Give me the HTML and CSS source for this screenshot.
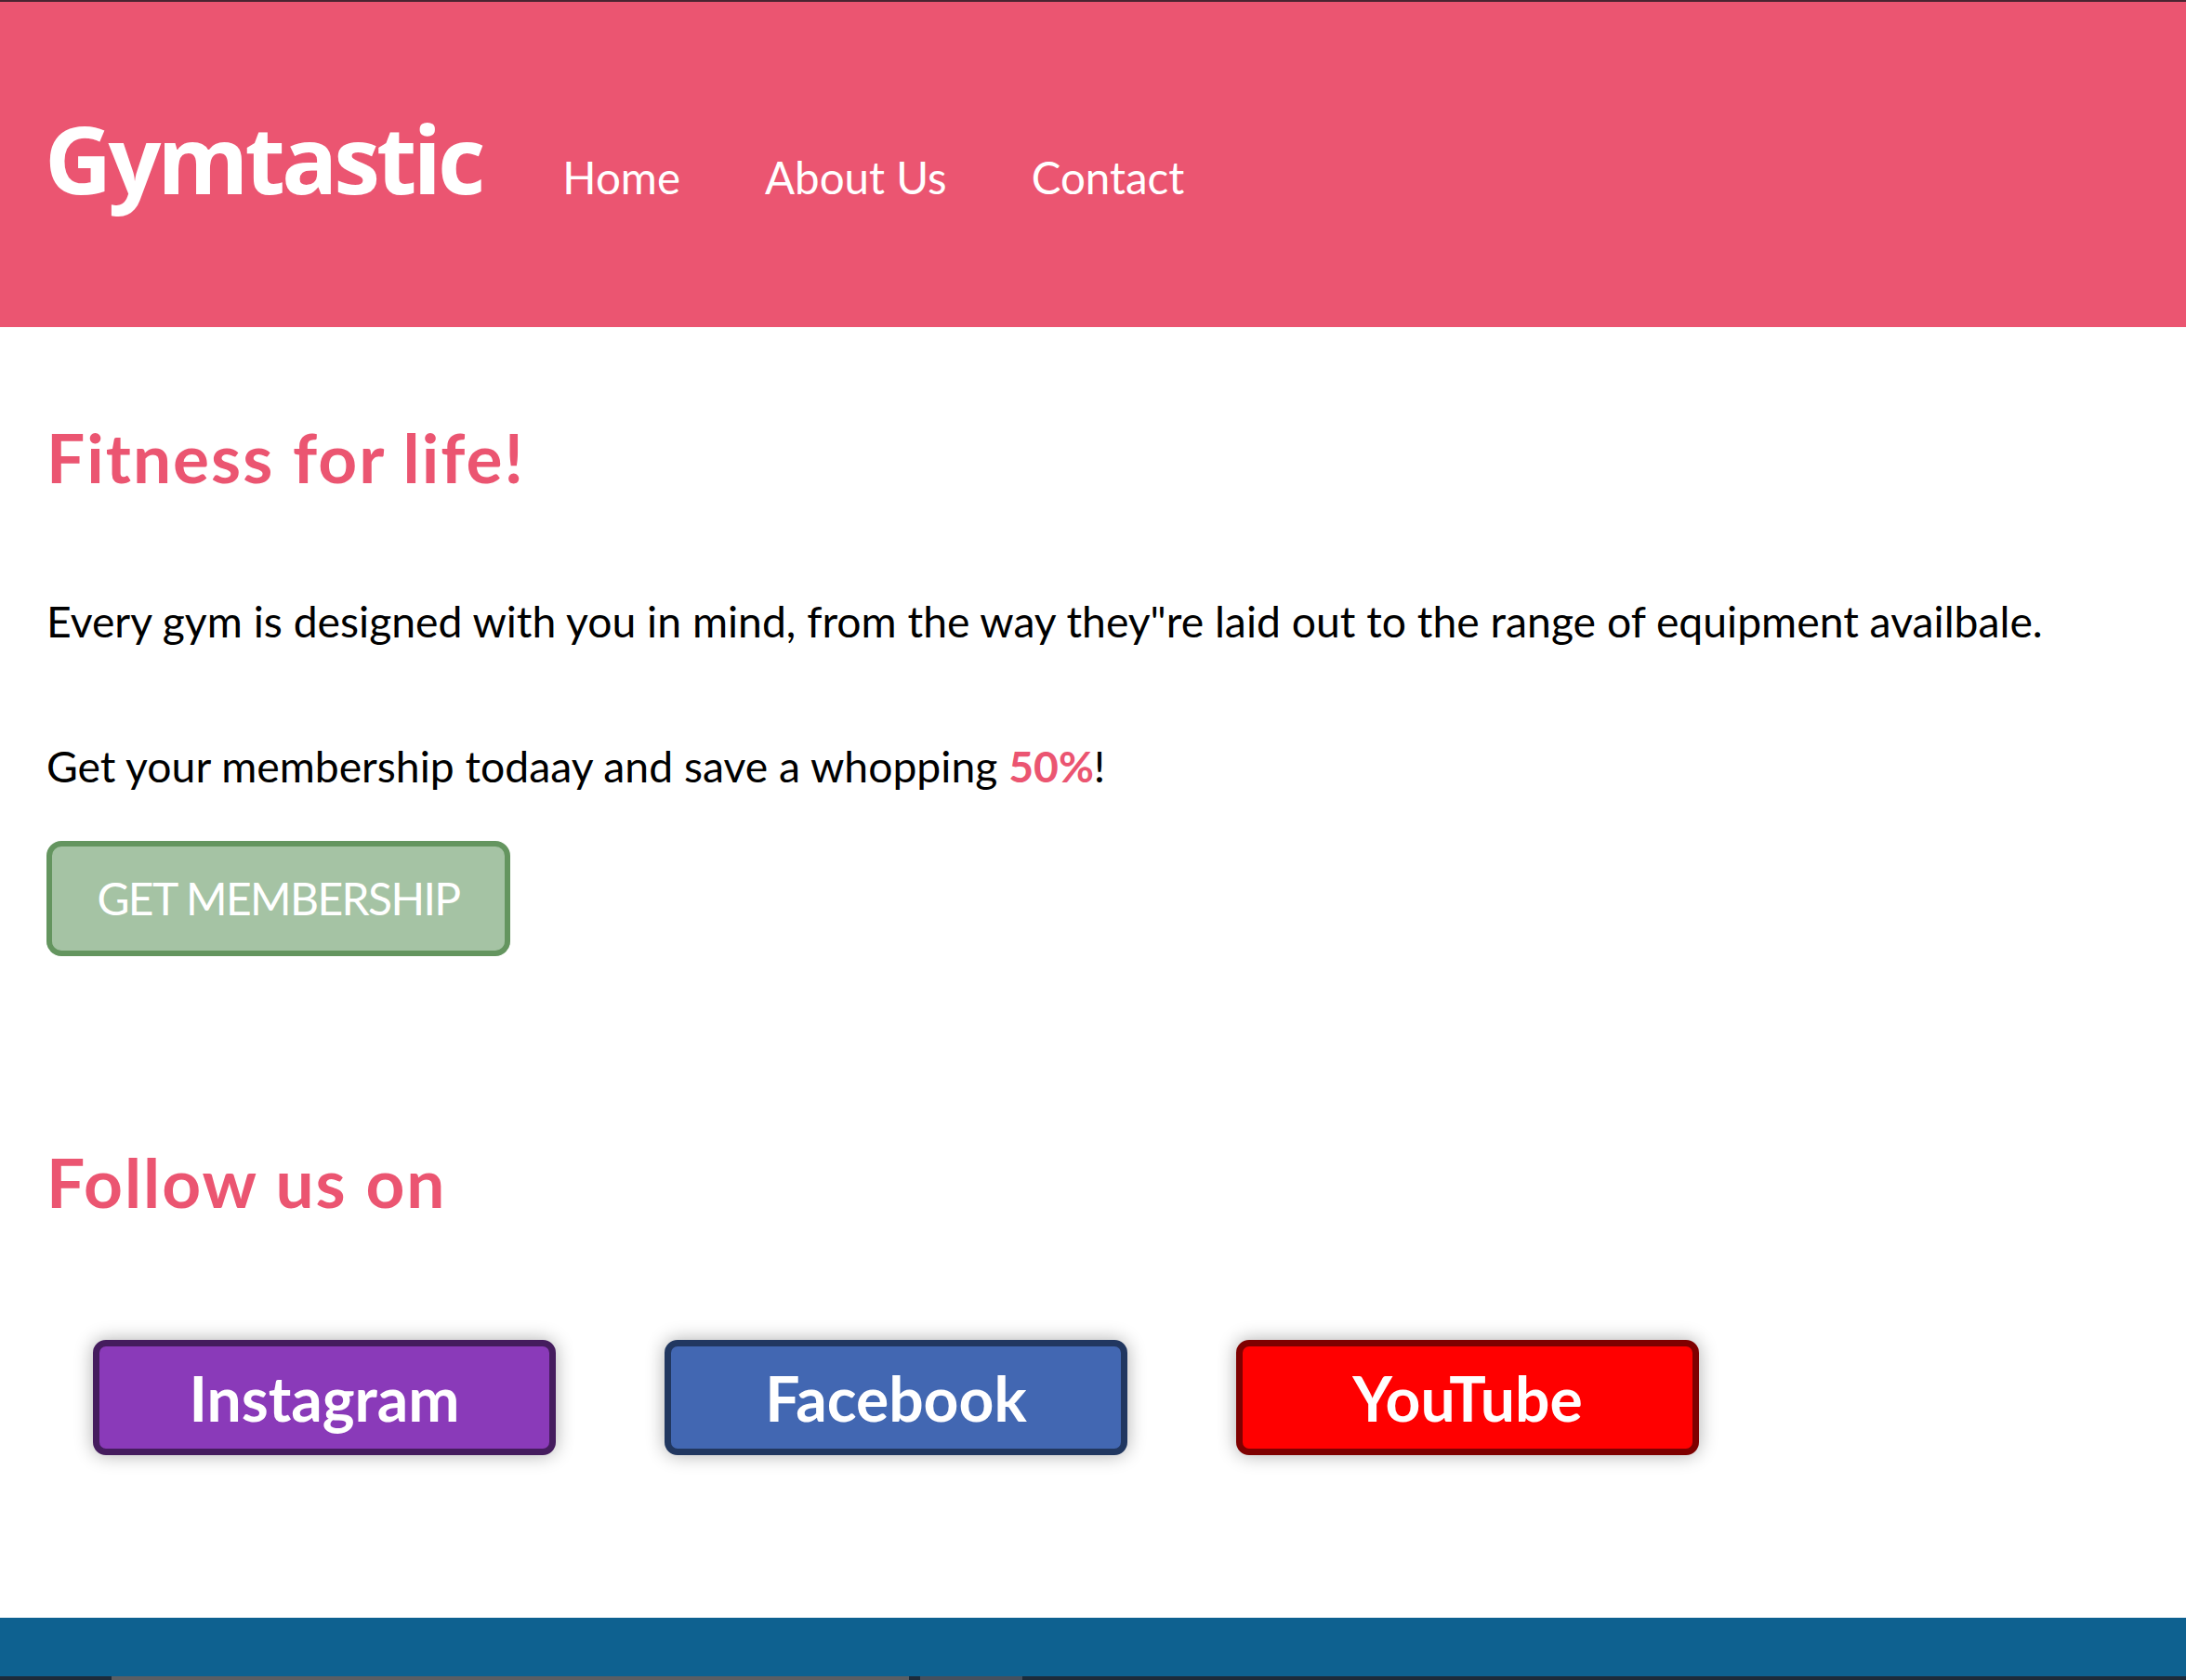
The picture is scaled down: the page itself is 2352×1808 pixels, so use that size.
FILE: index.html
```html
<!DOCTYPE html>
<html lang="en">
<head>
<meta charset="utf-8">
<title>Gymtastic</title>
<link rel="stylesheet" href="styles.css">
</head>
<body>
<header class="site-header">
  <div class="logo">Gymtastic</div>
  <nav class="nav">
    <a class="nav-link" href="#">Home</a>
    <a class="nav-link" href="#">About Us</a>
    <a class="nav-link" href="#">Contact</a>
  </nav>
</header>
<main class="content">
  <h1 class="title">Fitness for life!</h1>
  <p class="text first">Every gym is designed with you in mind, from the way they"re laid out to the range of equipment availbale.</p>
  <p class="text second">Get your membership todaay and save a whopping <strong class="hl">50%</strong>!</p>
  <a class="member-btn" href="#">GET MEMBERSHIP</a>
  <h2 class="title follow">Follow us on</h2>
  <div class="socials">
    <a class="social instagram" href="#">Instagram</a>
    <a class="social facebook" href="#">Facebook</a>
    <a class="social youtube" href="#">YouTube</a>
  </div>
</main>
<footer class="site-footer">
  <div class="footer-strip">
    <span class="strip-bar"></span>
    <span class="strip-piece"></span>
  </div>
</footer>
</body>
</html>
```
FILE: styles.css
```css
* { box-sizing: border-box; }
html, body { margin: 0; padding: 0; }
body {
  background: #ffffff;
  font-family: "Lato", "Open Sans", sans-serif;
  color: #000;
  overflow: hidden;
}
a { text-decoration: none; }

.site-header {
  height: 352px;
  background: #eb5571;
  border-top: 2px solid #4a2431;
  padding: 108px 48px 0;
  display: flex;
  align-items: baseline;
}
.logo {
  font-family: "Open Sans", sans-serif;
  font-weight: 700;
  font-size: 100px;
  line-height: 1.2;
  color: #fff;
  letter-spacing: -4px;
}
.nav {
  display: flex;
  align-items: baseline;
  gap: 91px;
  margin-left: 87px;
}
.nav-link {
  font-family: "Lato", sans-serif;
  font-size: 47.5px;
  line-height: 1.2;
  color: #fff;
}

.content {
  padding: 0 50px;
  display: flex;
  flex-direction: column;
  align-items: flex-start;
}
.title {
  margin: 97px 0 0;
  font-size: 73px;
  font-weight: 700;
  line-height: 1.2;
  letter-spacing: 2px;
  color: #eb5571;
}
.text {
  margin: 0;
  font-size: 46.3px;
  line-height: 1.2;
}
.text.first { margin-top: 104px; }
.text.second { margin-top: 101px; }
.hl { color: #eb5571; font-weight: 700; }

.member-btn {
  margin-top: 52px;
  width: 499px;
  height: 124px;
  display: flex;
  align-items: center;
  justify-content: center;
  background: #a5c3a4;
  border: 6px solid #64955f;
  border-radius: 16px;
  color: #fff;
  font-size: 48px;
  letter-spacing: -1.6px;
  line-height: 1.2;
}

.title.follow { margin-top: 200px; }

.socials {
  margin-top: 126px;
  padding-left: 50px;
  display: flex;
  gap: 117px;
}
.social {
  width: 498px;
  height: 124px;
  display: flex;
  align-items: center;
  justify-content: center;
  border: 7px solid;
  border-radius: 14px;
  color: #fff;
  font-size: 66px;
  font-weight: 700;
  line-height: 1.2;
  box-shadow: 0 0 20px rgba(0, 0, 0, 0.32);
}
.instagram { background: #8a3ab9; border-color: #451c5e; }
.facebook { background: #4267b2; border-color: #213760; }
.youtube { background: #ff0000; border-color: #7f0000; }

.site-footer {
  margin-top: 175px;
  background: #0e6190;
  height: 67px;
  display: flex;
  flex-direction: column;
  justify-content: flex-end;
}
.footer-strip {
  height: 4px;
  background: #1d2b3a;
  display: flex;
  gap: 12px;
  padding-left: 120px;
}
.strip-bar { width: 858px; background: #5b5e63; }
.strip-piece { width: 110px; background: #45505e; }
```
